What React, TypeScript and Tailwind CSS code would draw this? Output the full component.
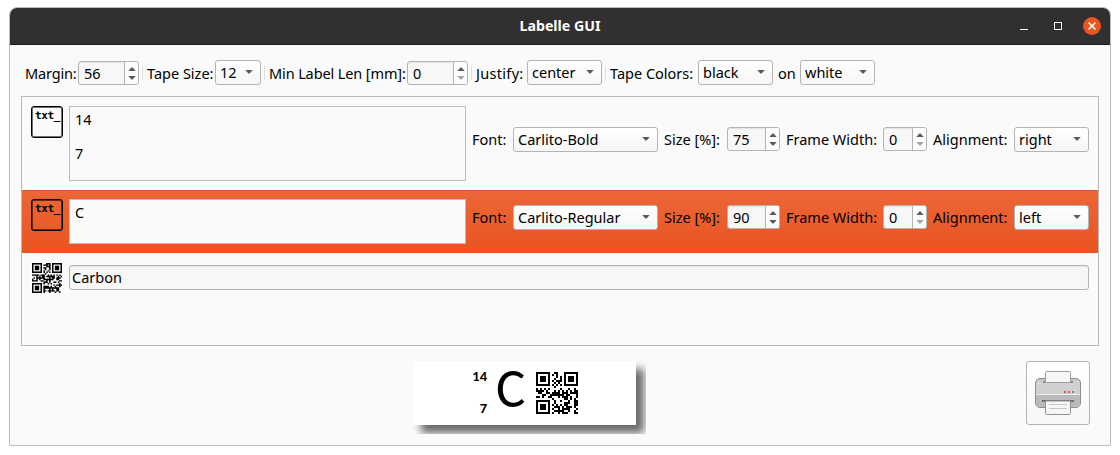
import React from 'react';

function gfMul(a: number, b: number) {
  let z = 0;
  for (let i = 7; i >= 0; i--) {
    z = (z << 1) ^ ((z >>> 7) * 0x11d);
    z ^= ((b >>> i) & 1) * a;
  }
  return z;
}

const SIZE = 21;
const LEVELS: Record<string, [number, number]> = { L: [1, 19], M: [0, 16], Q: [3, 13], H: [2, 9] };

/* Version 1 QR code in byte mode. */
function qrMatrix(text: string, level: string, mask: number): boolean[][] {
  const [ecl, nData] = LEVELS[level];
  const bits: number[] = [];
  const push = (v: number, n: number) => {
    for (let i = n - 1; i >= 0; i--) bits.push((v >>> i) & 1);
  };
  push(4, 4);
  push(text.length, 8);
  for (const c of text) push(c.charCodeAt(0), 8);
  push(0, 4);
  const data: number[] = [];
  for (let i = 0; i < bits.length; i += 8) data.push(parseInt(bits.slice(i, i + 8).join(''), 2));
  for (let p = 0xec; data.length < nData; p ^= 0xec ^ 0x11) data.push(p);
  const deg = 26 - nData;
  const div: number[] = Array(deg).fill(0);
  div[deg - 1] = 1;
  let root = 1;
  for (let i = 0; i < deg; i++) {
    for (let j = 0; j < deg; j++) {
      div[j] = gfMul(div[j], root);
      if (j + 1 < deg) div[j] ^= div[j + 1];
    }
    root = gfMul(root, 2);
  }
  const rem: number[] = Array(deg).fill(0);
  for (const b of data) {
    const f = b ^ rem.shift()!;
    rem.push(0);
    div.forEach((d, i) => {
      rem[i] ^= gfMul(d, f);
    });
  }
  const all = [...data, ...rem];
  const m: boolean[][] = Array.from({ length: SIZE }, () => Array(SIZE).fill(false));
  const fn: boolean[][] = Array.from({ length: SIZE }, () => Array(SIZE).fill(false));
  const set = (x: number, y: number, v: boolean) => {
    m[y][x] = v;
    fn[y][x] = true;
  };
  for (let i = 0; i < SIZE; i++) {
    set(6, i, i % 2 === 0);
    set(i, 6, i % 2 === 0);
  }
  for (const [cx, cy] of [[3, 3], [SIZE - 4, 3], [3, SIZE - 4]])
    for (let dy = -4; dy <= 4; dy++)
      for (let dx = -4; dx <= 4; dx++) {
        const d = Math.max(Math.abs(dx), Math.abs(dy));
        const x = cx + dx;
        const y = cy + dy;
        if (x >= 0 && x < SIZE && y >= 0 && y < SIZE) set(x, y, d !== 2 && d !== 4);
      }
  const fd = (ecl << 3) | mask;
  let r = fd;
  for (let i = 0; i < 10; i++) r = (r << 1) ^ ((r >>> 9) * 0x537);
  const fb = ((fd << 10) | r) ^ 0x5412;
  const bit = (i: number) => ((fb >>> i) & 1) === 1;
  for (let i = 0; i <= 5; i++) set(8, i, bit(i));
  set(8, 7, bit(6));
  set(8, 8, bit(7));
  set(7, 8, bit(8));
  for (let i = 9; i < 15; i++) set(14 - i, 8, bit(i));
  for (let i = 0; i < 8; i++) set(SIZE - 1 - i, 8, bit(i));
  for (let i = 8; i < 15; i++) set(8, SIZE - 15 + i, bit(i));
  set(8, SIZE - 8, true);
  const masks = [
    (x: number, y: number) => (x + y) % 2,
    (_: number, y: number) => y % 2,
    (x: number) => x % 3,
    (x: number, y: number) => (x + y) % 3,
    (x: number, y: number) => (Math.floor(x / 3) + Math.floor(y / 2)) % 2,
    (x: number, y: number) => ((x * y) % 2) + ((x * y) % 3),
    (x: number, y: number) => (((x * y) % 2) + ((x * y) % 3)) % 2,
    (x: number, y: number) => (((x + y) % 2) + ((x * y) % 3)) % 2,
  ];
  let k = 0;
  for (let right = SIZE - 1; right >= 1; right -= 2) {
    if (right === 6) right = 5;
    for (let v = 0; v < SIZE; v++)
      for (let j = 0; j < 2; j++) {
        const x = right - j;
        const y = ((right + 1) & 2) === 0 ? SIZE - 1 - v : v;
        if (!fn[y][x]) {
          const b = k < 208 ? ((all[k >>> 3] >>> (7 - (k & 7))) & 1) === 1 : false;
          k++;
          m[y][x] = b !== (masks[mask](x, y) === 0);
        }
      }
  }
  return m;
}

function QrCode({ text, level, mask, size }: { text: string; level: string; mask: number; size: number }) {
  const crisp = size % SIZE === 0;
  const d = qrMatrix(text, level, mask)
    .flatMap((row, y) => row.map((on, x) => (on ? `M${x} ${y}h1v1h-1z` : '')))
    .join('');
  return (
    <svg width={size} height={size} viewBox="0 0 21 21" shapeRendering={crisp ? 'crispEdges' : 'auto'} className="block shrink-0">
      <path d={d} stroke="#000" strokeWidth={crisp ? 0 : 0.06} />
    </svg>
  );
}

function Arrow({ up = false, dim = false }: { up?: boolean; dim?: boolean }) {
  return (
    <svg width="8" height="4" viewBox="0 0 8 4" className={dim ? 'fill-[#a5a5a5]' : 'fill-[#5a5a5a]'}>
      <path d={up ? 'M0.3 4 3.4 0.4h1.2L7.7 4z' : 'M0.3 0h7.4L4.6 3.6H3.4z'} />
    </svg>
  );
}

function Spin({ value, className, dim }: { value: string; className: string; dim?: boolean }) {
  return (
    <div className={`flex h-6 shrink-0 rounded-[3px] border border-[#b4b4b4] bg-[#f7f7f7] shadow-[inset_0_1px_1px_#e4e4e4] ${className}`}>
      <span className="flex-1 pl-[5px] leading-[22px]">{value}</span>
      <div className="flex w-[14px] flex-col items-center justify-center gap-[5px] rounded-r-[2px] border-l border-[#b4b4b4] bg-[#fcfcfc]">
        <Arrow up />
        <Arrow dim={dim} />
      </div>
    </div>
  );
}

function Select({ value, className }: { value: string; className: string }) {
  return (
    <div className={`flex h-[25px] shrink-0 items-center justify-between rounded-[3px] border border-[#b4b4b4] bg-linear-to-b from-white to-[#f6f6f6] pr-[7px] pb-px pl-1 ${className}`}>
      <span className="leading-[22px]">{value}</span>
      <Arrow />
    </div>
  );
}

function Label({ text, className }: { text: string; className: string }) {
  return <span className={`shrink-0 whitespace-nowrap leading-6 ${className}`}>{text}</span>;
}

function Divider() {
  return <div className="mx-[3px] mb-[5px] h-[14px] w-px shrink-0 bg-[#dedede]" />;
}

function TextIcon() {
  return (
    <div className="h-8 w-8 shrink-0 rounded-[3px] border border-black pl-[3px] font-['DejaVu_Sans_Mono',monospace] text-[11px] leading-[17px] font-bold tracking-[-0.4px] shadow-[inset_0_0_0_1px_rgba(0,0,0,0.55)]">
      txt_
    </div>
  );
}

function FontControls({ font, size, align }: { font: string; size: string; align: string }) {
  return (
    <div className="flex items-start">
      <Label text="Font:" className="w-[41px]" />
      <Select value={font} className="w-[145px]" />
      <Label text="Size [%]:" className="ml-[6px] w-[63px]" />
      <Spin value={size} className="w-[53px]" />
      <Label text="Frame Width:" className="ml-[6px] w-[97px]" />
      <Spin value="0" className="w-[44px]" dim />
      <Label text="Alignment:" className="ml-[6px] w-[81px]" />
      <Select value={align} className="w-[75px]" />
    </div>
  );
}

function PrinterIcon() {
  return (
    <svg width="48" height="48" viewBox="0 0 48 48">
      <defs>
        <linearGradient id="body" x1="0" y1="0" x2="0" y2="1">
          <stop offset="0" stopColor="#bdbdbd" />
          <stop offset="0.12" stopColor="#d2d2d2" />
          <stop offset="1" stopColor="#cccccc" />
        </linearGradient>
      </defs>
      <rect x="1.5" y="9.5" width="45" height="29" rx="4.5" fill="url(#body)" stroke="#8f8f8f" />
      <path d="M2 26h44v8a4 4 0 0 1-4 4H6a4 4 0 0 1-4-4z" fill="#bababa" />
      <path d="M2 25.5h44" stroke="#ececec" />
      <path d="M9 12h30v2H9z" fill="#8b8b8b" />
      <path d="M11.5 13.5V3.500a1 1 0 0 1 1-1h23a1 1 0 0 1 1 1V13.500z" fill="#f7f6f5" stroke="#a0a0a0" />
      <path d="M8 31h32v2H8z" fill="#6f6f6f" />
      <path d="M11.500 32v12.500a1 1 0 0 0 1 1h23a1 1 0 0 0 1-1V32z" fill="#f7f6f5" stroke="#929292" />
      <path d="M15 35.500h18M15 39.500h18" stroke="#c8c8c8" />
      <path d="M30 22h2v2h-2z" fill="#ed4a63" />
      <path d="M34 22h2v2h-2z" fill="#e8683a" />
      <path d="M38 22h2v2h-2z" fill="#5aa845" />
    </svg>
  );
}

export default function App() {
  return (
    <div className="h-[455px] w-[1120px] overflow-hidden bg-white pt-[7px] pl-[9px] font-['Noto_Sans',sans-serif] text-[14.5px] text-black">
      <div className="flex h-[439px] w-[1102px] flex-col overflow-hidden rounded-t-[8px] border border-[#bcbcbc] bg-[#fafafa]">
        <header className="flex h-[37px] shrink-0 items-center border-b border-[#1c1c1c] bg-[#322f30] pr-[9px]">
          <div className="w-[110px]" />
          <h1 className="flex-1 text-center text-[14.2px] leading-5 font-bold text-white">Labelle GUI</h1>
          <div className="flex w-[101px] items-center pl-[20px]">
            <svg width="9" height="8" viewBox="0 0 9 8"><path d="M0 7.500h8" stroke="#fff" /></svg>
            <svg width="8" height="8" viewBox="0 0 8 8" fill="none" className="ml-[25px]"><path d="M.5.5h7v7h-7z" stroke="#fff" /></svg>
            <svg width="18" height="18" viewBox="0 0 18 18" className="ml-auto">
              <circle cx="9" cy="9" r="9" fill="#e95420" />
              <path d="M5.500 5.500l7 7M12.500 5.500l-7 7" stroke="#fff" strokeWidth="1.500" />
            </svg>
          </div>
        </header>

        <div className="flex h-[51px] shrink-0 items-end pb-[11px] pl-[15px]">
          <Label text="Margin:" className="w-[53px] tracking-[-0.15px]" />
          <Spin value="56" className="w-[61px]" />
          <Divider />
          <Label text="Tape Size:" className="ml-[1px] w-[68px]" />
          <Select value="12" className="w-[46px]" />
          <Divider />
          <Label text="Min Label Len [mm]:" className="ml-[1px] w-[138px] tracking-[-0.12px]" />
          <Spin value="0" className="w-[61px]" dim />
          <Divider />
          <Label text="Justify:" className="ml-[1px] w-[51px] tracking-[0.3px]" />
          <Select value="center" className="w-[75px]" />
          <Divider />
          <Label text="Tape Colors:" className="ml-[1px] w-[88px]" />
          <Select value="black" className="w-[75px]" />
          <Label text="on" className="ml-[5px] w-[22px]" />
          <Select value="white" className="w-[75px]" />
        </div>

        <div className="ml-[11px] h-[250px] w-[1078px] shrink-0 border border-[#b9b9b9]">
          <div className="flex h-[93px] pt-[9px] pl-[9px]">
            <TextIcon />
            <div className="mr-[6px] ml-[6px] h-[75px] w-[397px] border border-[#bdbdbd] px-[5px] pt-1 leading-[17px] whitespace-pre">{'14\n\n7'}</div>
            <div className="mt-[21px]"><FontControls font="Carlito-Bold" size="75" align="right" /></div>
          </div>
          <div className="flex h-[63px] border-t border-[#d9572b] bg-linear-to-b from-[#ec6637] to-[#e95420] pt-2 pl-[9px]">
            <TextIcon />
            <div className="mr-[6px] ml-[6px] h-[45px] w-[397px] border border-[#bdbdbd] bg-[#fafafa] px-[5px] pt-1 leading-[17px]">C</div>
            <div className="mt-[6px]"><FontControls font="Carlito-Regular" size="90" align="left" /></div>
          </div>
          <div className="flex pt-[9px] pl-[9px]">
            <div className="flex h-8 w-8 items-center justify-center bg-white"><QrCode text="Labelle" level="L" mask={2} size={30} /></div>
            <div className="mt-[3px] ml-[6px] h-[25px] w-[1020px] rounded-[3px] border border-[#b4b4b4] bg-[#f7f7f7] pl-[2px] leading-[23px] shadow-[inset_0_1px_1px_#e4e4e4]">Carbon</div>
          </div>
        </div>

        <div className="flex items-start justify-between pt-[15px] pr-[20px] pl-[403px]">
          <div className="-mt-3 h-[85px] w-[233px] overflow-hidden pt-3">
            <div className="flex h-16 w-[223px] items-start bg-white pt-[11px] pl-[57px] font-['Carlito','Lato',sans-serif] shadow-[8px_8px_8px_#6a6a6a]">
              <div className="flex w-[17px] flex-col items-end text-[14.5px] leading-8 font-bold">
                <span className="-mt-3">14</span>
                <span>7</span>
              </div>
              <span className="-mt-[16px] ml-[9px] w-[40px] text-[55px] leading-[66px]">C</span>
              <QrCode text="Carbon" level="M" mask={0} size={42} />
            </div>
          </div>
          <div className="flex h-16 w-16 items-center justify-center rounded-[3px] border border-[#b4b4b4] bg-linear-to-b from-white to-[#f7f7f7]">
            <PrinterIcon />
          </div>
        </div>
      </div>
    </div>
  );
}
